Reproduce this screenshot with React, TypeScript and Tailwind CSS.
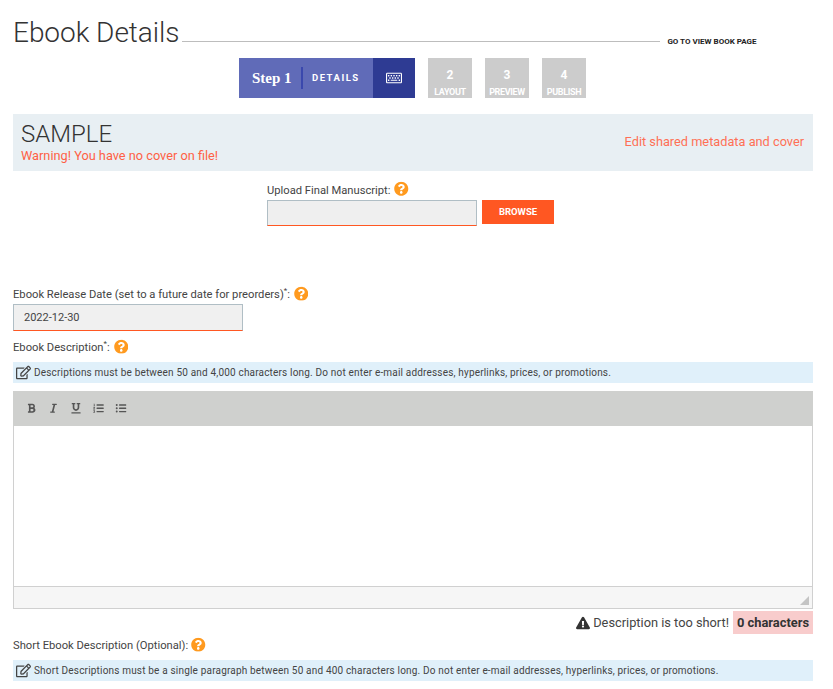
import {
  FaBold,
  FaExclamationTriangle,
  FaItalic,
  FaListOl,
  FaListUl,
  FaQuestionCircle,
  FaRegEdit,
  FaRegKeyboard,
  FaUnderline,
} from "react-icons/fa";

const HelpIcon = () => <FaQuestionCircle className="text-[#ff9a1f] text-[14.5px] shrink-0 -translate-y-[1.5px]" />;

const Note = ({ children }: { children: string }) => (
  <div className="h-[21px] bg-[#e0f0fa] flex items-center pl-[3px] text-[10px] tracking-[0.18px] text-[#444]">
    <FaRegEdit className="text-[15px] text-[#444] mr-[3px] shrink-0" />
    <span>{children}</span>
  </div>
);

const GreyStep = ({ num, label }: { num: string; label: string }) => (
  <div className="w-[44px] h-[40px] bg-[#cccccc] text-white flex flex-col items-center">
    <span className="text-[12px] leading-[14px] mt-[10px] font-bold">{num}</span>
    <span className="text-[9px] leading-[10px] mt-[5px] font-bold -tracking-[0.35px]">{label}</span>
  </div>
);

const App = () => {
  return (
    <div className="w-[833px] h-[689px] overflow-hidden bg-white pl-[13px] pr-[20px] font-['Roboto',sans-serif] text-[#444]">
      <div className="flex items-end h-[49px]">
        <h1 className="text-[28px] leading-[35px] font-light text-[#333] mr-[3px] mb-[-1px] -tracking-[0.05px]">
          Ebook Details
        </h1>
        <div className="w-[478px] h-px bg-[#bdbdbd] mb-[7px]" />
        <a className="ml-[7px] mb-[2px] text-[8px] leading-[10px] font-bold text-[#222] uppercase w-[95px] whitespace-nowrap">
          Go to view book page
        </a>
      </div>

      <div className="flex mt-[9px] ml-[226px] h-[40px]">
        <div className="w-[134px] bg-[#606bb8] flex items-center text-white">
          <span className="ml-[13px] font-['Liberation_Serif',serif] font-bold text-[15px] w-[38px] whitespace-nowrap">
            Step 1
          </span>
          <span className="w-[2px] h-[22px] bg-[#3a48ad] ml-[11px]" />
          <span className="ml-[9px] text-[9.5px] font-bold tracking-[1.5px]">DETAILS</span>
        </div>
        <div className="w-[42px] bg-[#2e3b93] flex items-center justify-center text-white">
          <FaRegKeyboard className="text-[16px]" />
        </div>
        <div className="flex gap-[13px] ml-[13px]">
          <GreyStep num="2" label="LAYOUT" />
          <GreyStep num="3" label="PREVIEW" />
          <GreyStep num="4" label="PUBLISH" />
        </div>
      </div>

      <div className="mt-[16px] h-[57px] bg-[#e8eff3] flex items-center justify-between pl-[8px] pr-[9px]">
        <div className="-mt-[3px]">
          <div className="text-[24px] leading-[28px] font-light text-[#333]">SAMPLE</div>
          <div className="text-[12.75px] leading-[15px] text-[#ff5f45]">Warning! You have no cover on file!</div>
        </div>
        <a className="text-[12.75px] text-[#ff6f55] -mt-[1px]">Edit shared metadata and cover</a>
      </div>

      <div className="ml-[254px] mt-[11px] h-[54px]">
        <div className="flex items-center gap-[4px] text-[11.2px] leading-[17px] h-[17px]">
          Upload Final Manuscript:
          <HelpIcon />
        </div>
        <div className="flex mt-[1px] items-start">
          <div className="w-[210px] h-[26px] bg-[#efefef] border border-[#b0bec5] border-b-[#ff5722]" />
          <button className="w-[72px] h-[24px] ml-[5px] bg-[#ff5722] text-white text-[9.5px] font-bold">BROWSE</button>
        </div>
      </div>

      <div className="mt-[51px] flex items-center h-[16px] text-[11.2px]">
        <span>Ebook Release Date (set to a future date for preorders)</span>
        <span className="text-[8px] self-start leading-[8px]">*</span>
        <span>:</span>
        <span className="ml-[4px]">
          <HelpIcon />
        </span>
      </div>
      <div className="mt-[1px] w-[230px] h-[27px] bg-[#f0f0f0] border border-[#b0bec5] border-b-[#ff5722] flex items-center pl-[10px] pt-[1px] text-[11px]">
        2022-12-30
      </div>

      <div className="mt-[9px] h-[16px] flex items-center text-[11.2px]">
        <span>Ebook Description</span>
        <span className="text-[8px] self-start leading-[8px]">*</span>
        <span>:</span>
        <span className="ml-[4px]">
          <HelpIcon />
        </span>
      </div>
      <div className="mt-[6px]">
        <Note>Descriptions must be between 50 and 4,000 characters long. Do not enter e-mail addresses, hyperlinks, prices, or promotions.</Note>
      </div>

      <div className="mt-[8px] h-[218px] border border-[#d0d0d0] border-t-0 flex flex-col">
        <div className="h-[35px] bg-[#cfd0ce] -mx-px flex items-center pl-[14px] text-[#555] text-[10.5px]">
          <FaBold className="w-[9px]" />
          <FaItalic className="w-[9px] ml-[13px]" />
          <FaUnderline className="w-[10px] ml-[13px]" />
          <FaListOl className="w-[11px] ml-[12px]" />
          <FaListUl className="w-[12px] ml-[11px]" />
        </div>
        <div className="flex-1 bg-white" />
        <div className="h-[22px] bg-[#f6f6f6] border-t border-[#d0d0d0] flex justify-end items-end p-[3px]">
          <svg width="9" height="9" viewBox="0 0 9 9">
            <path d="M9 0V9H0Z" fill="#c4c4c4" />
          </svg>
        </div>
      </div>

      <div className="flex justify-end items-center mt-[2px] h-[23px] text-[12.8px]">
        <FaExclamationTriangle className="text-[14px] text-[#333] mr-[3px]" />
        <span>Description is too short!</span>
        <span className="ml-[4px] h-full w-[80px] justify-center bg-[#f8cccc] font-bold flex items-center text-[#333] text-[12.9px]">
          0 characters
        </span>
      </div>

      <div className="mt-[4px] h-[16px] flex items-center text-[11.2px]">
        <span>Short Ebook Description (Optional):</span>
        <span className="ml-[3px]">
          <HelpIcon />
        </span>
      </div>
      <div className="mt-[6px]">
        <Note>Short Descriptions must be a single paragraph between 50 and 400 characters long. Do not enter e-mail addresses, hyperlinks, prices, or promotions.</Note>
      </div>
    </div>
  );
};

export default App;
